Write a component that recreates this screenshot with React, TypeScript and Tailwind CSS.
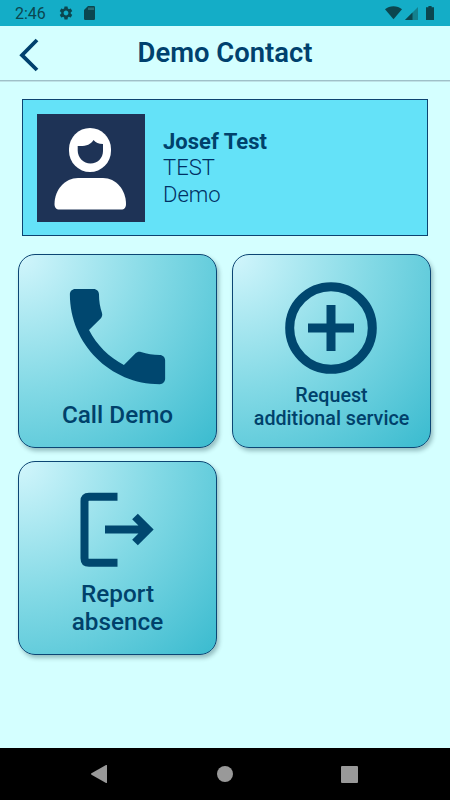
import type { ReactNode } from "react";

function StatusBar() {
  return (
    <div className="flex h-[26px] shrink-0 items-center bg-[#14adc7] pl-[15px] pr-[16px] text-[#0b464f]">
      <span className="mt-[2px] w-[43px] text-[16px] leading-[26px]">2:46</span>
      <svg className="h-[16px] w-[16px]" viewBox="0 0 24 24" fill="currentColor">
        <path d="M19.14 12.94c.04-.3.06-.61.06-.94 0-.32-.02-.64-.07-.94l2.03-1.58a.49.49 0 0 0 .12-.61l-1.92-3.32a.488.488 0 0 0-.59-.22l-2.39.96c-.5-.38-1.03-.7-1.62-.94l-.36-2.54a.484.484 0 0 0-.48-.41h-3.84c-.24 0-.43.17-.47.41l-.36 2.54c-.59.24-1.13.57-1.62.94l-2.39-.96c-.22-.08-.47 0-.59.22L2.74 8.87c-.12.21-.08.47.12.61l2.03 1.58c-.05.3-.09.63-.09.94s.02.64.07.94l-2.03 1.58a.49.49 0 0 0-.12.61l1.92 3.32c.12.22.37.29.59.22l2.39-.96c.5.38 1.03.7 1.62.94l.36 2.54c.05.24.24.41.48.41h3.84c.24 0 .44-.17.47-.41l.36-2.54c.59-.24 1.13-.56 1.62-.94l2.39.96c.22.08.47 0 .59-.22l1.92-3.32c.12-.22.07-.47-.12-.61l-2.01-1.58zM12 15.6A3.61 3.61 0 0 1 8.400 12c0-1.98 1.620-3.600 3.600-3.600s3.600 1.620 3.600 3.600-1.620 3.600-3.600 3.600z" />
      </svg>
      <svg className="ml-[10px] h-[14px] w-[11px]" viewBox="0 0 11 14" fill="currentColor">
        <path d="M4 0h5.800Q11 0 11 1.200v11.600Q11 14 9.800 14H1.200Q0 14 0 12.800V4z" />
        <path d="M4 1.500h6v2.500H4z" fill="#286b73" />
      </svg>
      <svg className="ml-auto h-[14px] w-[17px]" viewBox="0 0 17 14" fill="currentColor">
        <path d="M8.500 13.300L0 3.200C4.600-.9 12.400-.9 17 3.200z" />
      </svg>
      <svg className="ml-[3px] h-[13px] w-[13px]" viewBox="0 0 13 13">
        <path d="M13 0v13H0z" fill="#13818f" />
        <path d="M7.500 5.500V13H0z" fill="#0b464f" />
      </svg>
      <svg className="ml-[8px] h-[14px] w-[8px]" viewBox="0 0 8 14" fill="currentColor">
        <path d="M2.400 0h3.200v1.300H8V14H0V1.300h2.400z" />
      </svg>
    </div>
  );
}

function Header() {
  return (
    <header className="grid h-[55px] shrink-0 grid-cols-[60px_1fr_60px] border-b border-[#9fc0c8] shadow-[0_1px_0_#bfe2e6]">
      <button className="flex items-start pl-[19px] pt-[12px]" aria-label="Back">
        <svg className="block h-[34px] w-[20px]" viewBox="0 0 20 34" fill="none" stroke="#00416e" strokeWidth="3.800">
          <path d="M18 2L3 17.200L18 32" />
        </svg>
      </button>
      <h1 className="pt-[11px] text-center text-[27.400px] font-semibold leading-[32px] text-[#00416e]">
        Demo Contact
      </h1>
    </header>
  );
}

function ContactCard() {
  return (
    <section className="ml-[22px] mt-[18px] flex h-[137px] w-[405.500px] border border-[#0d4371] bg-[#64e2f8] pl-[14px] pt-[14px]">
      <svg className="h-[108px] w-[108px]" viewBox="0 0 108 108">
        <rect width="108" height="108" fill="#1e3356" />
        <rect x="32" y="14" width="42" height="44" rx="21" fill="#fff" />
        <path d="M40.700 31.900c7.300.5 12.800-.7 15.800-5.900 2.300 2.600 5 3.800 9.500 4V37c0 7-5.500 12.500-12.500 12.500S40.700 43.500 40.700 36.500z" fill="#1e3356" />
        <path d="M41 64h25c13 0 23 12 23 26 0 3.500-1.500 5.500-5 5.500H22.500c-3.500 0-5-2-5-5.500C17.500 76 28 64 41 64z" fill="#fff" />
      </svg>
      <div className="ml-[18px] mt-[15px] text-[22px] leading-[26.300px] text-[#003064]">
        <p className="font-bold text-[#00416b]">Josef Test</p>
        <p className="font-light">TEST</p>
        <p className="font-light">Demo</p>
      </div>
    </section>
  );
}

function Tile({ children }: { children: ReactNode }) {
  return (
    <button className="flex h-[194px] w-[199px] flex-col items-center rounded-[17px] border border-[#0c4674] bg-[radial-gradient(farthest-corner_at_0_0,#d2f6fc_0%,#82d9e5_50%,#3abbcf_100%)] text-center font-medium text-[#00416b] shadow-[2px_3px_4px_rgba(0,40,50,0.3)]">
      {children}
    </button>
  );
}

function NavigationBar() {
  return (
    <nav className="mt-auto flex h-[52px] shrink-0 items-center bg-black pl-[91px] pr-[92px]">
      <svg className="h-[18px] w-[16px]" viewBox="0 0 16 18" fill="#999">
        <path d="M.5 8.300L15 0q1-.4 1 .6v16.800q0 1-1 .6L.5 9.700q-1-.7 0-1.400z" />
      </svg>
      <span className="ml-[110px] h-[16px] w-[16px] rounded-full bg-[#999]" />
      <span className="ml-auto h-[17px] w-[17px] rounded-[1px] bg-[#999]" />
    </nav>
  );
}

export default function App() {
  return (
    <div className="flex h-[800px] w-[450px] flex-col overflow-hidden bg-[#d4ffff] font-['Roboto',sans-serif]">
      <StatusBar />
      <Header />
      <ContactCard />
      <main className="ml-[18px] mt-[18px] grid grid-cols-[199px_199px] gap-x-[15px] gap-y-[13px]">
        <Tile>
          <svg className="mt-[18px] h-[127px] w-[127px] shrink-0" viewBox="0 0 24 24" fill="#00476f">
            <path d="M6.620 10.790c1.440 2.830 3.760 5.140 6.590 6.590l2.200-2.200c.27-.27.67-.36 1.020-.24 1.120.37 2.330.57 3.570.57.55 0 1 .45 1 1V20c0 .55-.45 1-1 1-9.390 0-17-7.610-17-17 0-.55.45-1 1-1h3.500c.55 0 1 .45 1 1 0 1.250.2 2.450.57 3.570.11.35.03.74-.25 1.020l-2.200 2.200z" />
          </svg>
          <span className="text-[24.300px] leading-[30px]">Call Demo</span>
        </Tile>
        <Tile>
          <svg className="mr-[2px] mt-[27px] h-[92px] w-[92px] shrink-0" viewBox="0 0 92 92" fill="none" stroke="#00476f" strokeWidth="9">
            <circle cx="46" cy="46" r="41.300" />
            <path d="M46 23v46M23 46h46" />
          </svg>
          <span className="mt-[10px] text-[19.700px] leading-[23px]">
            Request<br />additional service
          </span>
        </Tile>
        <Tile>
          <svg className="mt-[30px] h-[75px] w-[75px] shrink-0" viewBox="0 0 75 75" fill="none" stroke="#00476f" strokeWidth="8">
            <path d="M37.500 4.700H9Q4.500 4.700 4.500 9.200v57Q4.500 70.700 9 70.700h28.500" />
            <path d="M25 37.500H68M55 24.500l13 13L55 50.500" />
          </svg>
          <span className="mt-[13px] text-[24.300px] leading-[28px]">
            Report<br />absence
          </span>
        </Tile>
      </main>
      <NavigationBar />
    </div>
  );
}
